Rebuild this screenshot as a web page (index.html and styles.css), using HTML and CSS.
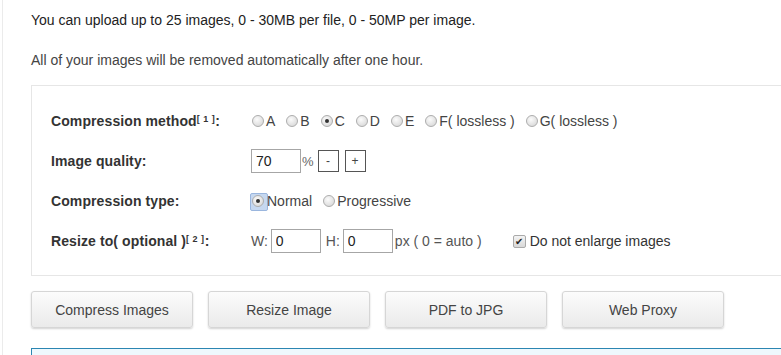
FILE: index.html
```html
<!DOCTYPE html>
<html lang="en">
<head>
    <meta charset="UTF-8">
    <meta name="viewport" content="width=device-width, initial-scale=1.0">
    <title>Compress Images</title>
    <link rel="stylesheet" href="styles.css">
</head>
<body>
    <div class="page">
        <p class="note">You can upload up to 25 images, 0 - 30MB per file, 0 - 50MP per image.</p>
        <p class="note muted">All of your images will be removed automatically after one hour.</p>

        <div class="options">
            <div class="row">
                <div class="label">Compression method<sup>[ 1 ]</sup>:</div>
                <div class="field">
                    <label class="opt"><span class="radio"></span>A</label>
                    <label class="opt"><span class="radio"></span>B</label>
                    <label class="opt"><span class="radio checked"></span>C</label>
                    <label class="opt"><span class="radio"></span>D</label>
                    <label class="opt"><span class="radio"></span>E</label>
                    <label class="opt"><span class="radio"></span>F( lossless )</label>
                    <label class="opt"><span class="radio"></span>G( lossless )</label>
                </div>
            </div>
            <div class="row">
                <div class="label">Image quality:</div>
                <div class="field">
                    <input class="box" type="text" value="70">
                    <span class="unit">%</span>
                    <button class="step">-</button>
                    <button class="step">+</button>
                </div>
            </div>
            <div class="row">
                <div class="label">Compression type:</div>
                <div class="field">
                    <label class="opt"><span class="radio checked focus"></span>Normal</label>
                    <label class="opt"><span class="radio"></span>Progressive</label>
                </div>
            </div>
            <div class="row">
                <div class="label">Resize to( optional )<sup>[ 2 ]</sup>:</div>
                <div class="field">
                    <span class="dim">W:</span>
                    <input class="box" type="text" value="0">
                    <span class="dim">H:</span>
                    <input class="box last" type="text" value="0">
                    <span class="dim">px ( 0 = auto )</span>
                    <label class="opt keep"><span class="check">&#10004;</span>Do not enlarge images</label>
                </div>
            </div>
        </div>

        <div class="actions">
            <button class="action">Compress Images</button>
            <button class="action">Resize Image</button>
            <button class="action">PDF to JPG</button>
            <button class="action">Web Proxy</button>
        </div>

        <div class="info"></div>
    </div>
</body>
</html>
```

FILE: styles.css
```css
* {
    margin: 0;
    padding: 0;
    box-sizing: border-box;
}

body {
    font-family: 'Liberation Sans', Arial, sans-serif;
    color: #333;
    background: #fff;
    overflow: hidden;
}

.page {
    margin-left: 2px;
    border-left: 1px solid #ebebeb;
    padding: 10px 0 0 28px;
    height: 355px;
    overflow: hidden;
}

.note {
    font-size: 14px;
    line-height: 20px;
    color: #222;
    margin-bottom: 20px;
}

.note.muted {
    color: #444;
    margin-bottom: 15px;
}

.options {
    border: 1px solid #e6e6e6;
    border-right: none;
    padding: 15px 0 14px 19px;
    margin-right: -10px;
}

.row {
    display: flex;
    align-items: center;
    height: 40px;
}

.label {
    width: 200px;
    font-size: 14px;
    font-weight: bold;
    color: #333;
    letter-spacing: 0.1px;
}

.label sup {
    font-size: 9px;
    vertical-align: 4px;
    letter-spacing: 0.5px;
}

.field {
    display: flex;
    align-items: center;
    font-size: 14px;
    color: #444;
}

.opt {
    display: flex;
    align-items: center;
    margin-right: 10px;
}

.radio {
    width: 12px;
    height: 12px;
    border-radius: 50%;
    border: 1px solid #adadad;
    background: radial-gradient(circle at 40% 35%, #fbfbfb, #d2d2d2);
    margin: 0 2px 0 1px;
    position: relative;
}

.radio.checked::after {
    content: '';
    position: absolute;
    left: 3px;
    top: 3px;
    width: 4px;
    height: 4px;
    border-radius: 50%;
    background: #333;
}

.radio.focus {
    margin-right: 3px;
}

.radio.focus::before {
    content: '';
    position: absolute;
    left: -3px;
    top: -3px;
    width: 16px;
    height: 16px;
    border-radius: 2px;
    background: #c6d8f0;
    border: 1px solid #9ab6de;
    z-index: -1;
}

.box {
    width: 50px;
    height: 24px;
    border: 1px solid #a6a6a6;
    padding: 0 4px;
    font-family: inherit;
    font-size: 14px;
    color: #222;
    outline: none;
}

.unit {
    margin: 0 2px 0 1px;
    color: #666;
    font-size: 13px;
}

.step {
    width: 21px;
    height: 22px;
    border: 1px solid #555;
    background: #fff;
    font-family: inherit;
    font-size: 12px;
    color: #444;
    margin-left: 6px;
}

.step:first-of-type {
    margin-left: 2px;
}

.dim {
    color: #555;
    margin-right: 3px;
}

.dim + .box {
    margin-right: 5px;
}

.dim + .box.last {
    margin-right: 2px;
}

.keep {
    margin-left: 28px;
    color: #333;
}

.check {
    width: 13px;
    height: 13px;
    border: 1px solid #aaa;
    border-radius: 2px;
    background: linear-gradient(#f4f4f4, #d8d8d8);
    font-size: 10px;
    line-height: 11px;
    text-align: center;
    color: #222;
    margin-right: 4px;
}

.actions {
    display: flex;
    gap: 15px;
    margin-top: 15px;
}

.action {
    width: 162px;
    height: 37px;
    border: 1px solid #d6d6d6;
    border-radius: 3px;
    background: linear-gradient(#fcfcfc, #eaeaea);
    box-shadow: 0 1px 2px rgba(0,0,0,0.18);
    font-family: inherit;
    font-size: 14px;
    color: #444;
    cursor: pointer;
}

.action:hover {
    background: #eee;
}

.info {
    margin-top: 20px;
    margin-right: -10px;
    height: 40px;
    border: 1px solid #2b86b2;
    background: #eef8fd;
}
```
